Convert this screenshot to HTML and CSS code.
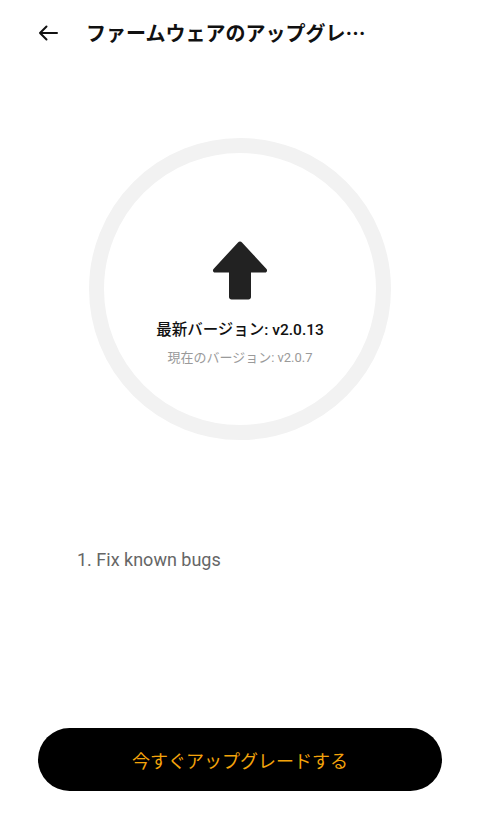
FILE: index.html
```html
<!DOCTYPE html>
<html lang="ja">
<head>
  <meta charset="UTF-8">
  <meta name="viewport" content="width=device-width, initial-scale=1.0">
  <title>ファームウェアのアップグレード</title>
  <link rel="stylesheet" href="styles.css">
</head>
<body>
  <div id="page">
    <div id="header">
      <button class="back" aria-label="戻る">
        <svg width="20" height="16" viewBox="0 0 20 16">
          <path d="M19 8H2M8.5 1.5L2 8l6.5 6.5" fill="none" stroke="#111" stroke-width="2" stroke-linecap="round" stroke-linejoin="round"/>
        </svg>
      </button>
      <h1>ファームウェアのアップグレード</h1>
    </div>

    <div id="ring">
      <svg class="up" width="58" height="60" viewBox="0 0 58 60">
        <path d="M29 1.5c.8 0 1.5.3 2 .9l24.5 26.6c1.3 1.4.3 3.5-1.6 3.5H40V57c0 1.4-1.1 2.5-2.5 2.5h-17C19.1 59.5 18 58.4 18 57V32.5H4.1c-1.9 0-2.9-2.1-1.6-3.5L27 2.4c.5-.6 1.2-.9 2-.9z" fill="#222"/>
      </svg>
      <div class="latest">最新バージョン: v2.0.13</div>
      <div class="current">現在のバージョン: v2.0.7</div>
    </div>

    <div id="notes">1. Fix known bugs</div>

    <button id="upgrade">今すぐアップグレードする</button>
  </div>
</body>
</html>
```

FILE: styles.css
```css
body {
  margin: 0;
  background: #fff;
  font-family: Roboto, "Noto Sans CJK JP", sans-serif;
  color: #111;
}

#page {
  display: flex;
  flex-direction: column;
  min-height: 100vh;
  box-sizing: border-box;
  padding-bottom: 42px;
}

#header {
  display: flex;
  align-items: center;
  height: 30px;
  padding: 18px 0 0 38px;
}

.back {
  display: flex;
  align-items: center;
  padding: 0;
  border: none;
  background: none;
  cursor: pointer;
  width: 20px;
  height: 30px;
}

h1 {
  margin: 0 0 0 28px;
  width: 284px;
  font-family: "Noto Sans CJK JP", sans-serif;
  font-size: 20px;
  font-weight: 700;
  line-height: 30px;
  white-space: nowrap;
  overflow: hidden;
  text-overflow: ellipsis;
}

#ring {
  align-self: center;
  width: 302px;
  height: 302px;
  box-sizing: border-box;
  margin-top: 90px;
  border: 15px solid #f2f2f2;
  border-radius: 50%;
  display: flex;
  flex-direction: column;
  align-items: center;
  padding-top: 87px;
}

.latest {
  margin-top: 20px;
  font-size: 15.5px;
  font-weight: 500;
  line-height: 20px;
  color: #111;
}

.current {
  margin-top: 10px;
  font-size: 13px;
  line-height: 16px;
  color: #9a9a9a;
}

#notes {
  margin-top: 108px;
  padding-left: 77px;
  font-size: 18px;
  line-height: 24px;
  color: #666;
}

#upgrade {
  margin: auto 38px 0;
  height: 63px;
  border: none;
  border-radius: 32px;
  background: #000;
  color: #f4a40b;
  font-family: inherit;
  font-size: 18px;
  cursor: pointer;
}
```
